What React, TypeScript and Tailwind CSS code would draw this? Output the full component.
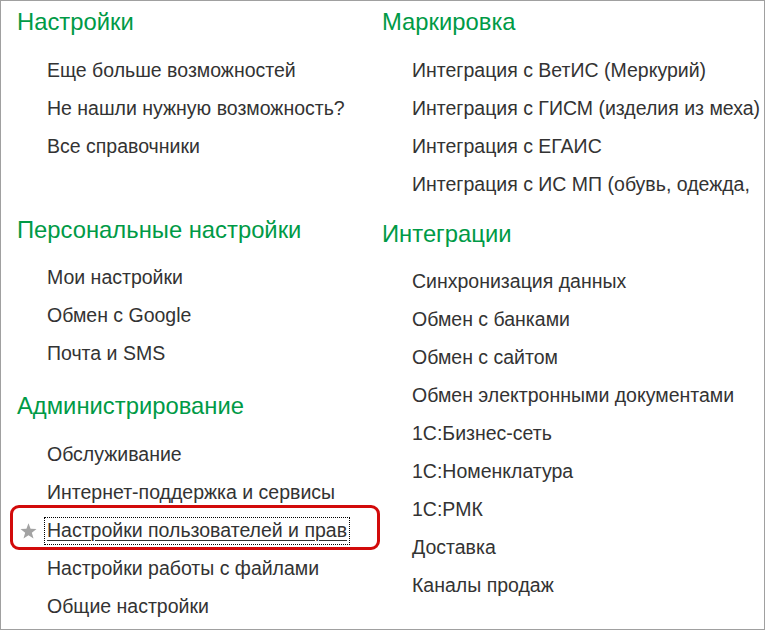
const sections: { left: Section[]; right: Section[] } = {
  left: [
    {
      title: "Настройки",
      mt: "mt-0",
      gap: "mt-[8px]",
      items: ["Еще больше возможностей", "Не нашли нужную возможность?", "Все справочники"],
    },
    {
      title: "Персональные настройки",
      mt: "mt-[44px]",
      gap: "mt-[7px]",
      items: ["Мои настройки", "Обмен с Google", "Почта и SMS"],
    },
    {
      title: "Администрирование",
      mt: "mt-[13px]",
      gap: "mt-[8px]",
      items: [
        "Обслуживание",
        "Интернет-поддержка и сервисы",
        "Настройки пользователей и прав",
        "Настройки работы с файлами",
        "Общие настройки",
      ],
    },
  ],
  right: [
    {
      title: "Маркировка",
      mt: "mt-0",
      gap: "mt-[8px]",
      items: [
        "Интеграция с ВетИС (Меркурий)",
        "Интеграция с ГИСМ (изделия из меха)",
        "Интеграция с ЕГАИС",
        "Интеграция с ИС МП (обувь, одежда,",
      ],
    },
    {
      title: "Интеграции",
      mt: "mt-[10px]",
      gap: "mt-[7px]",
      items: [
        "Синхронизация данных",
        "Обмен с банками",
        "Обмен с сайтом",
        "Обмен электронными документами",
        "1С:Бизнес-сеть",
        "1С:Номенклатура",
        "1С:РМК",
        "Доставка",
        "Каналы продаж",
      ],
    },
  ],
};

interface Section {
  title: string;
  mt: string;
  gap: string;
  items: string[];
}

const HIGHLIGHT = "Настройки пользователей и прав";

function Star() {
  return (
    <svg width="17" height="16" viewBox="0 0 24 23" className="absolute left-[-27px] top-1/2 -translate-y-1/2">
      <polygon
        points="12,0.5 15,8.3 23.5,8.7 16.8,14 19.2,22.3 12,17.5 4.8,22.3 7.2,14 0.5,8.7 9,8.3"
        fill="#a3a3a3"
      />
    </svg>
  );
}

function Item({ text }: { text: string }) {
  if (text === HIGHLIGHT) {
    return (
      <div className="relative h-[38px] flex items-center pl-[30px] pt-[2px]">
        <div className="absolute left-[-7px] top-[-6px] w-[370px] h-[45px] border-[3px] border-[#d20a0a] rounded-[9px]" />
        <div className="relative flex items-center">
          <Star />
          <span className="ml-[-3px] px-[2px] py-[3px] border border-dotted border-black underline underline-offset-[3px] decoration-1 text-[#333]">
            {text}
          </span>
        </div>
      </div>
    );
  }
  return (
    <div className="h-[38px] flex items-center pl-[30px] pt-[2px] text-[#333]">
      <span>{text}</span>
    </div>
  );
}

function Column({ list, width }: { list: Section[]; width: string }) {
  return (
    <div className={`${width} shrink-0 flex flex-col`}>
      {list.map((s) => (
        <div key={s.title} className={s.mt}>
          <div className="h-[42px] flex items-center text-[23.8px] text-[#009a46]">{s.title}</div>
          <div className={s.gap}>
            {s.items.map((it) => (
              <Item key={it} text={it} />
            ))}
          </div>
        </div>
      ))}
    </div>
  );
}

export default function App() {
  return (
    <div
      className="w-[765px] h-[630px] bg-white border border-[#a0a0a0] overflow-hidden whitespace-nowrap text-[19.5px] leading-none"
      style={{ fontFamily: '"Liberation Sans", Arial, sans-serif' }}
    >
      <div className="flex pl-[16px]">
        <Column list={sections.left} width="w-[365px]" />
        <Column list={sections.right} width="w-[400px]" />
      </div>
    </div>
  );
}
